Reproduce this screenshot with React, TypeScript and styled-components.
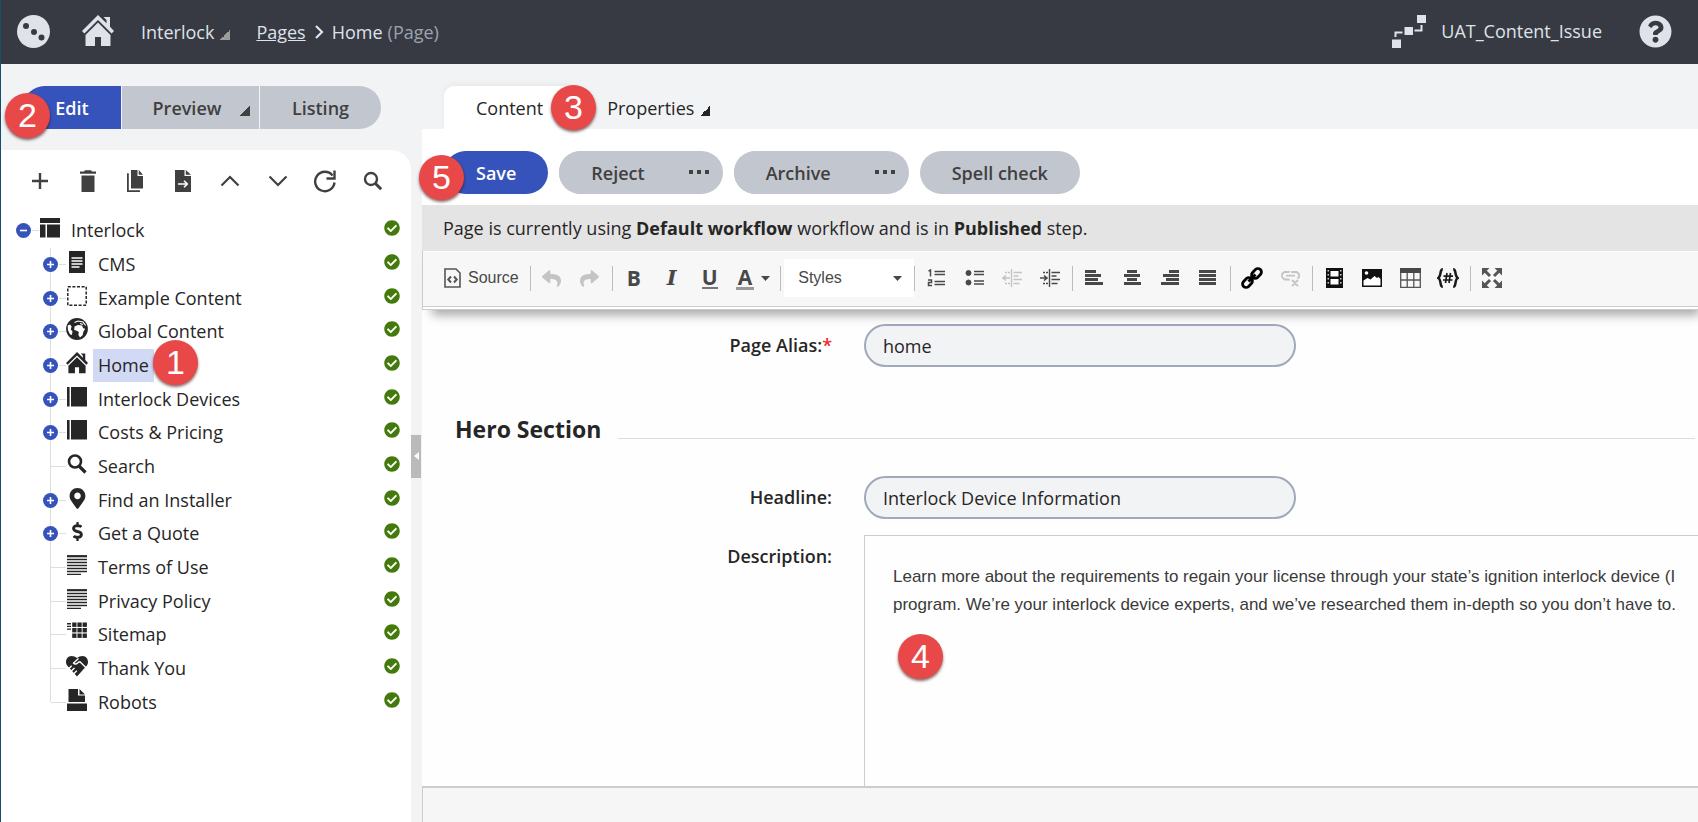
import React from 'react';
import styled, { createGlobalStyle, css } from 'styled-components';
import { FaCheckCircle, FaMapMarkerAlt, FaDollarSign, FaReply, FaShare, FaQuestionCircle } from 'react-icons/fa';

const ink = '#404040';

const GlobalStyle = createGlobalStyle`
  *, *::before, *::after { box-sizing: border-box; }
  body {
    margin: 0;
    background: #f2f3f5;
    color: #262626;
    font-family: 'Open Sans', sans-serif;
    font-size: 18px;
    line-height: 24px;
  }
  button, input, textarea, select { font: inherit; color: inherit; margin: 0; }
  button { border: 0; padding: 0; background: none; cursor: pointer; }
  a { color: inherit; }
  ul { list-style: none; margin: 0; padding: 0; }
  svg { display: block; flex: none; }
`;

/* ---------- Shell ---------- */

const Shell = styled.div`
  min-height: 100vh;
  display: flex;
  flex-direction: column;
  border-left: 1px solid #14506b;
  overflow: hidden;
`;

const TopBar = styled.header`
  height: 64px;
  flex: none;
  display: flex;
  align-items: center;
  padding: 0 26px 2px 16px;
  background: #373a42;
  color: #dfe2e8;
`;

const LogoLink = styled.a`
  display: flex;
  margin-right: 32px;
`;

const Breadcrumb = styled.nav`
  display: flex;
  align-items: center;
  flex: 1;
  padding-top: 2px;
  white-space: nowrap;
`;

const SiteButton = styled.button`
  display: flex;
  align-items: center;
  gap: 6px;
  margin: 0 26px 0 27px;
`;

const Chevron = styled.svg`
  margin: 0 8px 0 9px;
`;

const Muted = styled.span`
  color: #9da3b0;
  margin-left: 5px;
`;

const UserArea = styled.div`
  display: flex;
  align-items: center;
  gap: 15px;
  margin-right: 37px;
`;

const Corner = styled.span<{ $tone?: string }>`
  width: 10px;
  height: 10px;
  margin-top: 6px;
  background: linear-gradient(135deg, transparent 50%, ${(p) => p.$tone ?? '#262626'} 50%);
`;

const Body = styled.div`
  flex: 1;
  display: flex;
  min-height: 0;
`;

/* ---------- Left column ---------- */

const Sidebar = styled.aside`
  width: 410px;
  flex: none;
  display: flex;
  flex-direction: column;
`;

const Modes = styled.div`
  position: relative;
  display: flex;
  gap: 1px;
  padding: 22px 0 21px 22px;
`;

const ModeButton = styled.button<{ $active?: boolean; $width: number }>`
  height: 43px;
  width: ${(p) => p.$width}px;
  display: flex;
  align-items: center;
  justify-content: center;
  gap: 19px;
  font-weight: 600;
  background: ${(p) => (p.$active ? '#3553ba' : '#c2c6cf')};
  color: ${(p) => (p.$active ? '#fff' : ink)};
  &:first-child { border-radius: 22px 0 0 22px; }
  &:nth-child(2) { padding-left: 22px; }
  &:nth-child(3) { border-radius: 0 22px 22px 0; }
`;

const TreePanel = styled.section`
  flex: 1;
  background: #fff;
  border-radius: 0 20px 0 0;
  padding: 19px 11px 20px 14px;
`;

const TreeTools = styled.div`
  display: flex;
  justify-content: space-between;
  padding: 0 15px 0 13px;
  margin-bottom: 20px;
`;

const ToolButton = styled.button`
  width: 24px;
  height: 24px;
  display: flex;
  align-items: center;
  justify-content: center;
  color: ${ink};
`;

const Children = styled.ul`
  position: relative;
  display: grid;
  grid-auto-rows: 34px 33px 34px;
  padding-left: 27px;
  &::before {
    content: '';
    position: absolute;
    left: 35px;
    top: 1px;
    bottom: 16px;
    width: 1px;
    background: #dedede;
  }
`;

const Row = styled.div`
  position: relative;
  height: 34px;
  display: flex;
  align-items: center;
`;

const Toggle = styled.button`
  width: 17px;
  height: 17px;
`;

const Leaf = styled.span`
  width: 17px;
`;

const Connector = styled.span<{ $leaf?: boolean }>`
  width: ${(p) => (p.$leaf ? 15 : 7)}px;
  margin-left: ${(p) => (p.$leaf ? -8 : 0)}px;
  height: 1px;
  background: #dedede;
`;

const NodeIcon = styled.span`
  width: 22px;
  height: 22px;
  margin: 0 5px 4px 0;
  display: flex;
  align-items: center;
  justify-content: center;
`;

const NodeLabel = styled.a<{ $selected?: boolean }>`
  height: 33px;
  line-height: 33px;
  padding: 0 5px;
  text-decoration: none;
  white-space: nowrap;
  background: ${(p) => (p.$selected ? '#d1d9f5' : 'transparent')};
`;

const Status = styled(FaCheckCircle)`
  margin: 0 0 4px auto;
  color: #437a0b;
`;

const Splitter = styled.div`
  width: 11px;
  flex: none;
  display: flex;
  align-items: center;
`;

const SplitHandle = styled.button`
  width: 10px;
  height: 43px;
  margin-top: 26px;
  display: flex;
  align-items: center;
  justify-content: center;
  background: #bababa;
`;

/* ---------- Main column ---------- */

const Main = styled.main`
  flex: 1;
  min-width: 0;
  display: flex;
  flex-direction: column;
`;

const Tabs = styled.div`
  position: relative;
  display: flex;
  padding: 22px 0 0 22px;
`;

const Tab = styled.button<{ $active?: boolean }>`
  height: 43px;
  display: flex;
  align-items: center;
  gap: 6px;
  padding: 0 32px;
  ${(p) =>
    p.$active &&
    css`
      background: #fff;
      border-radius: 10px 10px 0 0;
      box-shadow: 0 -2px 6px rgba(0, 0, 0, 0.05);
    `}
`;

const Actions = styled.div`
  position: relative;
  display: flex;
  gap: 11px;
  padding: 22px 22px 11px;
  background: #fff;
`;

const Action = styled.button<{ $primary?: boolean }>`
  height: 43px;
  padding: 0 32px;
  border-radius: 22px;
  font-weight: 600;
  white-space: nowrap;
  background: ${(p) => (p.$primary ? '#3553ba' : '#c2c6cf')};
  color: ${(p) => (p.$primary ? '#fff' : ink)};
`;

const SplitAction = styled.div`
  display: flex;
  border-radius: 22px;
  background: #c2c6cf;
  & > ${Action} { padding-right: 0; }
`;

const More = styled.button`
  padding: 0 14px 2px 44px;
  color: ${ink};
`;

const Notice = styled.p`
  margin: 0;
  padding: 11px 21px;
  background: #e4e4e4;
  b { font-weight: 700; }
`;

const EditorBar = styled.div`
  position: relative;
  z-index: 1;
  height: 59px;
  flex: none;
  display: flex;
  align-items: center;
  padding: 0 0 4px 11px;
  background: #f7f7f7;
  border: 1px solid #ccc;
  border-width: 0 0 1px 1px;
  box-shadow: inset 0 1px #fff, inset 0 -2px #fff, inset 0 -3px #ccc, 6px 9px 10px -4px rgba(0, 0, 0, 0.35);
  font-family: 'Liberation Sans', sans-serif;
  font-size: 16px;
  color: #484848;
`;

const EditorGroup = styled.div`
  height: 25px;
  display: flex;
  align-items: center;
  padding: 0 3px 0 2px;
  & + & { border-left: 1px solid #bcbcbc; }
`;

const EditorButton = styled.button<{ $faded?: boolean; $pad?: number }>`
  height: 30px;
  min-width: 38px;
  padding: 0 ${(p) => p.$pad ?? 0}px;
  display: flex;
  align-items: center;
  justify-content: center;
  gap: 7px;
  white-space: nowrap;
  ${(p) => p.$faded && 'color: #c4c4c4;'}
`;

const Glyph = styled.span<{ $kind?: 'italic' | 'underline' | 'color' }>`
  font-family: 'Open Sans', sans-serif;
  font-weight: 700;
  font-size: 21px;
  line-height: 20px;
  ${(p) => p.$kind === 'italic' && "font-family: 'DejaVu Serif', serif; font-style: italic;"}
  ${(p) => p.$kind === 'underline' && 'border-bottom: 2px solid #777;'}
  ${(p) => p.$kind === 'color' && 'border-bottom: 3px solid #999; padding: 0 2px;'}
`;

const Combo = styled.div`
  position: relative;
  display: flex;
  align-items: center;
  margin-left: 1px;
  svg { position: absolute; right: 9px; pointer-events: none; }
`;

const ComboSelect = styled.select`
  width: 130px;
  height: 38px;
  padding: 0 14px;
  border: 0;
  appearance: none;
  background: #fff;
  margin-right: -3px;
`;

const Form = styled.form`
  flex: 1;
  display: flex;
  flex-direction: column;
  padding-top: 14px;
  background: #fefefe;
`;

const Field = styled.div<{ $grow?: boolean }>`
  display: grid;
  grid-template-columns: 410px minmax(0, 1fr);
  column-gap: 32px;
  ${(p) => p.$grow && 'flex: 1; margin-top: 16px;'}
`;

const Label = styled.label`
  line-height: 43px;
  height: 43px;
  text-align: right;
  font-weight: 600;
`;

const Required = styled.span`
  color: #f0282d;
`;

const TextInput = styled.input`
  width: 100%;
  max-width: 432px;
  height: 43px;
  padding: 0 17px;
  border: 2px solid #a0a9ba;
  border-radius: 22px;
  background: #f2f3f5;
`;

const SectionTitle = styled.div`
  display: flex;
  gap: 17px;
  align-items: flex-end;
  margin: 47px 3px 32px 33px;
  &::after {
    content: '';
    flex: 1;
    height: 1px;
    margin-bottom: 5px;
    background: #d9dde4;
  }
`;

const Heading = styled.h2`
  margin: 0;
  font-size: 23px;
  line-height: 30px;
  font-weight: 700;
`;

const RichArea = styled.div`
  position: relative;
  display: flex;
`;

const RichText = styled.textarea`
  flex: 1;
  min-height: 251px;
  padding: 27px 0 0 28px;
  border: 1px solid #ccc;
  border-width: 1px 0 0 1px;
  background: #fefefe;
  color: #3a3a3a;
  font-family: 'Liberation Sans', sans-serif;
  font-size: 17px;
  line-height: 28px;
  resize: none;
  overflow: hidden;
  white-space: pre;
  outline: 0;
`;

const Footer = styled.footer`
  height: 36px;
  flex: none;
  border: 1px solid #ccc;
  border-width: 2px 0 0 1px;
  background: #f6f6f6;
`;

const Badge = styled.span<{ $x: number; $y: number }>`
  position: absolute;
  z-index: 2;
  left: ${(p) => p.$x}px;
  top: ${(p) => p.$y}px;
  width: 45px;
  height: 45px;
  border-radius: 50%;
  background: #e94848;
  box-shadow: 0 2px 3px rgba(60, 0, 0, 0.6);
  color: #fff;
  font-family: 'Liberation Sans', sans-serif;
  font-size: 34px;
  line-height: 44px;
  text-align: center;
`;

/* ---------- Drawings ---------- */

const HomeShape = ({ size }: { size: number }) => (
  <svg width={size} height={size} viewBox="0 0 32 32" fill="currentColor">
    <path d="M16 0 0 16l2.400 2.400L16 5l13.600 13.400L32 16l-4-4.200V2h-6.500l3 3v3.300z" />
    <path d="M16 7.500 3.500 20v11H13v-9h6v9h9.500V20z" />
  </svg>
);

const Caret = () => (
  <svg width="9" height="5" viewBox="0 0 9 5"><path d="M0 0h9L4.500 5z" fill="#484848" /></svg>
);

const Dots = () => (
  <svg width="20" height="4" viewBox="0 0 20 4" fill={ink}><path d="M0 0h4v4H0zM8 0h4v4H8zM16 0h4v4h-4z" /></svg>
);

const Bars = ({ rows }: { rows: number[][] }) => (
  <svg width="18" height="18" viewBox="0 0 18 18" fill="currentColor">
    {rows.map(([x, y, w, h], i) => <rect key={i} x={x} y={y} width={w} height={h} />)}
  </svg>
);

const ToggleMark = ({ open }: { open?: boolean }) => (
  <svg width="17" height="17" viewBox="0 0 17 17">
    <circle cx="8.500" cy="8.500" r="7.500" fill="#3553ba" />
    <path d={open ? 'M5 8.500h7' : 'M5 8.500h7M8.500 5v7'} stroke="#fff" strokeWidth="1.600" />
  </svg>
);

const icons: Record<string, React.ReactNode> = {
  layout: (
    <svg width="20" height="20" viewBox="0 0 20 20"><path d="M0 0h20v5H0zM0 6.500h5.500v13H0zM7 6.500h13v13H7z" fill="#262626" /></svg>
  ),
  page: (
    <svg width="18" height="22" viewBox="0 0 18 22">
      <path d="M1 0h16v22H1z" fill="#262626" />
      <path d="M3.500 7h11M3.500 10h11M3.500 13h11M3.500 16h8" stroke="#fff" strokeWidth="1.400" />
    </svg>
  ),
  dashed: (
    <svg width="20" height="20" viewBox="0 0 20 20">
      <rect x=".8" y=".8" width="18.400" height="18.400" fill="none" stroke="#262626" strokeWidth="1.500" strokeDasharray="3 1.600" />
    </svg>
  ),
  globe: (
    <svg width="22" height="22" viewBox="0 0 22 22">
      <circle cx="11" cy="11" r="10.900" fill="#262626" />
      <path d="M1.700 7.500 4 6.500l1.600 2-.8 3 1.700 2-.6 3.500-2-.8-2-4.200z" fill="#fff" />
      <path d="M8.500 8.500 12 7l4 .6 1.200 2.600 2 .6-1.800 3-.8 3.500-2.600 2.200-1.600-2.500.4-3-2-1.200-2.600-.8z" fill="#fff" />
      <path d="M8.500 4.500 12 3l5 1 2.600 3.500M14 5.500l3 1" fill="none" stroke="#fff" strokeWidth="1.200" />
    </svg>
  ),
  home: <HomeShape size={22} />,
  book: (
    <svg width="20" height="20" viewBox="0 0 20 20"><path d="M0 0h2.600v19.500H0zM4 0h16v19.500H4z" fill="#262626" /></svg>
  ),
  search: (
    <svg width="20" height="20" viewBox="0 0 20 20" fill="none" stroke="#262626">
      <circle cx="8" cy="7.500" r="6" strokeWidth="2.600" /><path d="m12 12 6.500 6.500" strokeWidth="3.200" />
    </svg>
  ),
  pin: <FaMapMarkerAlt size={21} />,
  dollar: <FaDollarSign size={19} />,
  lines: (
    <svg width="20" height="20" viewBox="0 0 20 20">
      <path d="M0 1.200h20" stroke="#262626" strokeWidth="2.200" />
      <path d="M0 4.500h20M0 7.500h20M0 10.500h20M0 13.500h20M0 16.500h20M0 19.300h14" stroke="#262626" strokeWidth="1.300" />
    </svg>
  ),
  sitemap: (
    <svg width="20" height="20" viewBox="0 0 20 20" fill="#262626">
      <path d="M0 1h4v1.400H0zM0 3.700h4v1.400H0zM0 6.400h4v1.400H0z" />
      {[0.500, 6, 11.500].map((y) => [5.200, 10.400, 15.600].map((x) => <rect key={`${x}-${y}`} x={x} y={y} width="4.300" height="4.400" />))}
    </svg>
  ),
  handshake: (
    <svg width="22" height="21" viewBox="0 0 22 21">
      <path
        d="M5.500 0C2 0 0 3 0 6c0 2 1 3.600 2.500 5L11 20.500 19.500 11C21 9.600 22 8 22 6c0-3-2-6-5.500-6C14.400 0 12.600.8 11 2 9.400.8 7.600 0 5.500 0z"
        fill="#262626"
      />
      <path d="M12.500 2.500 7.500 7c1.200 1.800 3.500 1.200 5-.8l1.500-.4 6 6" fill="none" stroke="#fff" strokeWidth="1.400" />
      <path d="m2.500 13 3.200-3.200M4.800 15.600l3.700-3.600M7.500 18l3.300-3.300" fill="none" stroke="#fff" strokeWidth="1.400" />
    </svg>
  ),
  robots: (
    <svg width="20" height="22" viewBox="0 0 20 22" fill="#262626"><path d="M1.500 0H11v6.500h7V13H1.500zM12.500 0 18 5.500h-5.500zM0 14.500h20V22H0z" /></svg>
  ),
};

const nodes: [string, string, boolean][] = [
  ['CMS', 'page', true],
  ['Example Content', 'dashed', true],
  ['Global Content', 'globe', true],
  ['Home', 'home', true],
  ['Interlock Devices', 'book', true],
  ['Costs & Pricing', 'book', true],
  ['Search', 'search', false],
  ['Find an Installer', 'pin', true],
  ['Get a Quote', 'dollar', true],
  ['Terms of Use', 'lines', false],
  ['Privacy Policy', 'lines', false],
  ['Sitemap', 'sitemap', false],
  ['Thank You', 'handshake', false],
  ['Robots', 'robots', false],
];

const treeTools: [string, React.ReactNode][] = [
  ['Add', <svg width="18" height="18" viewBox="0 0 18 18"><path d="M1 9h16M9 1v16" stroke={ink} strokeWidth="2.400" /></svg>],
  ['Delete', <svg width="18" height="22" viewBox="0 0 18 22" fill={ink}><path d="M1 1.500h4L6 .3h6l1 1.200h4v2.300H1zM2.500 5.500h13V22h-13z" /></svg>],
  ['Copy', <svg width="18" height="22" viewBox="0 0 18 22" fill={ink}><path d="M5 0h6.500v6H17v12.500H5zM12.700 0 17 4.700h-4.300zM1 3.200h1.800v17H14V22H1z" /></svg>],
  ['Move', <svg width="18" height="22" viewBox="0 0 18 22"><path d="M1 0h9.500v6H17v16H1zM11.800 0 17 4.700h-5.200z" fill={ink} /><path d="M4 14h9M10 10.800l3.300 3.200-3.300 3.200" fill="none" stroke="#fff" strokeWidth="1.600" /></svg>],
  ['Move up', <svg width="20" height="12" viewBox="0 0 20 12"><path d="m1.500 10.500 8.500-8.500 8.500 8.500" fill="none" stroke={ink} strokeWidth="2.200" /></svg>],
  ['Move down', <svg width="20" height="12" viewBox="0 0 20 12"><path d="M1.500 1.500 10 10l8.500-8.500" fill="none" stroke={ink} strokeWidth="2.200" /></svg>],
  ['Refresh', <svg width="24" height="24" viewBox="0 0 24 24"><path d="M19.500 6.500A9.700 9.700 0 1 0 21.500 13.500" fill="none" stroke={ink} strokeWidth="2.400" /><path d="M21.500 1.500v8h-8" fill="none" stroke={ink} strokeWidth="2.400" /></svg>],
  ['Search', <svg width="20" height="20" viewBox="0 0 20 20" fill="none" stroke={ink}><circle cx="8" cy="8" r="6" strokeWidth="2.400" /><path d="m12.200 12.200 6 6" strokeWidth="3" /></svg>],
];

const IndentIcon = ({ out }: { out?: boolean }) => (
  <svg width="20" height="18" viewBox="0 0 20 18" stroke="currentColor" fill="none">
    <path d="M9.500 0v18" strokeWidth="1.400" />
    <path d="M3 3.500h2M6 3.500h2M3 14.500h2M6 14.500h2M11.500 3.500H20M11.500 7h5M11.500 10.500H20M11.500 14.500h6" strokeWidth="1.500" />
    <path d={out ? 'M1 9h7M4 6.500 1 9l3 2.500' : 'M0 9h6M4 6.500 7 9l-3 2.500'} strokeWidth="1.600" />
  </svg>
);

const alignments: [string, number[][]][] = [
  ['Align left', [[0, 1, 11, 3], [0, 5, 16, 3], [0, 9, 13, 3], [0, 13, 18, 3]]],
  ['Center', [[4, 1, 10, 3], [1, 5, 16, 3], [4, 9, 10, 3], [1, 13, 17, 3]]],
  ['Align right', [[8, 1, 10, 3], [2, 5, 16, 3], [5, 9, 13, 3], [0, 13, 18, 3]]],
  ['Justify', [[0, 1, 17, 3], [0, 5, 17, 3], [0, 9, 17, 3], [0, 13, 17, 3]]],
];

/* ---------- Page ---------- */

function Tree() {
  return (
    <nav aria-label="Pages">
      <ul>
        <li>
          <Row>
            <Toggle type="button" aria-label="Collapse Interlock"><ToggleMark open /></Toggle>
            <Connector />
            <NodeIcon>{icons.layout}</NodeIcon>
            <NodeLabel href="#interlock">Interlock</NodeLabel>
            <Status size={16} />
          </Row>
          <Children>
            {nodes.map(([name, icon, branch]) => (
              <li key={name}>
                <Row>
                  {branch ? <Toggle type="button" aria-label={`Expand ${name}`}><ToggleMark /></Toggle> : <Leaf />}
                  <Connector $leaf={!branch} />
                  <NodeIcon>{icons[icon]}</NodeIcon>
                  <NodeLabel href="#node" $selected={name === 'Home'}>{name}</NodeLabel>
                  {name === 'Home' && <Badge $x={111} $y={-8}>1</Badge>}
                  <Status size={16} />
                </Row>
              </li>
            ))}
          </Children>
        </li>
      </ul>
    </nav>
  );
}

function EditorToolbar() {
  return (
    <EditorBar>
      <EditorGroup>
        <EditorButton type="button" $pad={8}>
          <svg width="17" height="20" viewBox="0 0 17 20" fill="none" stroke="#555">
            <path d="M1 1h11l4 4v14H1z" strokeWidth="1.600" />
            <path d="M7 8.500 4.300 11.500 7 14.500M10 8.500l2.700 3-2.700 3" strokeWidth="2" />
          </svg>
          Source
        </EditorButton>
      </EditorGroup>
      <EditorGroup>
        <EditorButton type="button" $faded aria-label="Undo"><FaReply size={19} /></EditorButton>
        <EditorButton type="button" $faded aria-label="Redo"><FaShare size={19} /></EditorButton>
      </EditorGroup>
      <EditorGroup>
        <EditorButton type="button"><Glyph>B</Glyph></EditorButton>
        <EditorButton type="button"><Glyph $kind="italic">I</Glyph></EditorButton>
        <EditorButton type="button"><Glyph $kind="underline">U</Glyph></EditorButton>
        <EditorButton type="button" $pad={7}><Glyph $kind="color">A</Glyph><Caret /></EditorButton>
      </EditorGroup>
      <EditorGroup>
        <Combo>
          <ComboSelect aria-label="Styles"><option>Styles</option></ComboSelect>
          <Caret />
        </Combo>
      </EditorGroup>
      <EditorGroup>
        <EditorButton type="button" aria-label="Numbered list">
          <svg width="18" height="18" viewBox="0 0 18 18" fill="none" stroke="currentColor">
            <path d="M1.500 2.200 3.500 1v6.500M1 11h3.500v2.500H1.500v3H5" strokeWidth="1.500" />
            <path d="M7.500 2.500H18M7.500 5.500H18M7.500 12.500H18M7.500 15.500H18" strokeWidth="1.400" />
          </svg>
        </EditorButton>
        <EditorButton type="button" aria-label="Bulleted list">
          <svg width="19" height="18" viewBox="0 0 19 18" fill="currentColor" stroke="currentColor">
            <circle cx="3.500" cy="4" r="2.500" /><circle cx="3.500" cy="13.500" r="2.500" />
            <path d="M9 2.500h10M9 5.500h10M9 12h10M9 15h10" strokeWidth="1.400" />
          </svg>
        </EditorButton>
        <EditorButton type="button" $faded aria-label="Decrease indent"><IndentIcon out /></EditorButton>
        <EditorButton type="button" aria-label="Increase indent"><IndentIcon /></EditorButton>
      </EditorGroup>
      <EditorGroup>
        {alignments.map(([name, rows]) => (
          <EditorButton key={name} type="button" aria-label={name}><Bars rows={rows} /></EditorButton>
        ))}
      </EditorGroup>
      <EditorGroup>
        <EditorButton type="button" aria-label="Link">
          <svg width="22" height="22" viewBox="0 0 22 22" fill="none" stroke="#000" strokeWidth="2.800">
            <rect x="-5.500" y="-3.500" width="11" height="7" rx="3.500" transform="translate(15.500 6.500) rotate(-45)" />
            <rect x="-5.500" y="-3.500" width="11" height="7" rx="3.500" transform="translate(6.500 15.500) rotate(-45)" />
            <path d="m7.500 14.500 7-7" strokeWidth="3" />
          </svg>
        </EditorButton>
        <EditorButton type="button" $faded aria-label="Unlink">
          <svg width="19" height="17" viewBox="0 0 19 17" fill="none" stroke="currentColor" strokeWidth="1.800">
            <path d="M8 2.500V2H3.500L1 4v3l2.500 2.500H8V9M10 2.500 11 2h4.500L18 4v3l-1.500 1.500M5 5.700h9M11 10l6 6M17 10l-6 6" />
          </svg>
        </EditorButton>
      </EditorGroup>
      <EditorGroup>
        <EditorButton type="button" aria-label="Media">
          <svg width="17" height="20" viewBox="0 0 17 20">
            <path d="M0 0h17v20H0z" fill="#111" />
            <path d="M4.500 3h8v5.500h-8zM4.500 11h8v5.500h-8z" fill="#fff" />
            <path d="M2.200 2v16M14.800 2v16" stroke="#fff" strokeWidth="1.200" strokeDasharray="1.600 2.400" />
          </svg>
        </EditorButton>
        <EditorButton type="button" aria-label="Image">
          <svg width="20" height="18" viewBox="0 0 20 18">
            <path d="M0 0h20v18H0z" fill="#111" />
            <path d="M1.500 16.500v-5l4-2.500 3 1.500 4-3.500 2.500 2 1.500-1 2 2v6.500z" fill="#fff" />
            <circle cx="4.500" cy="4" r="1.800" fill="#fff" />
          </svg>
        </EditorButton>
        <EditorButton type="button" aria-label="Table">
          <svg width="21" height="20" viewBox="0 0 21 20" fill="none" stroke="#555">
            <path d="M0 0h21v5H0z" fill="#484848" stroke="none" />
            <path d="M.7 5v14.300h19.600V5M.7 12h19.600M7.200 5v14M13.800 5v14" strokeWidth="1.300" />
          </svg>
        </EditorButton>
        <EditorButton type="button" aria-label="Insert token">
          <svg width="22" height="20" viewBox="0 0 22 20" fill="none" stroke="#1b1b1b" strokeWidth="2.500">
            <path d="M5.800 1.200C2.300 1.200 4.800 8 1.300 10c3.500 2 1 8.800 4.500 8.800M16.200 1.200c3.500 0 1 6.800 4.500 8.800-3.500 2-1 8.800-4.500 8.800" />
            <path d="M10 5 8.500 15M13.500 5 12 15M6.500 8.200h9.500M6 12h9.500" strokeWidth="1.700" />
          </svg>
        </EditorButton>
      </EditorGroup>
      <EditorGroup>
        <EditorButton type="button" aria-label="Maximize">
          <svg width="20" height="20" viewBox="0 0 20 20" fill="#555" stroke="#555">
            <path d="M0 0h7.500L0 7.500zM20 0v7.500L12.500 0zM0 20v-7.500L7.500 20zM20 20h-7.500l7.500-7.500z" stroke="none" />
            <path d="m3 3 5 5M17 3l-5 5M3 17l5-5M17 17l-5-5" strokeWidth="3" />
          </svg>
        </EditorButton>
      </EditorGroup>
    </EditorBar>
  );
}

export default function App() {
  return (
    <Shell>
      <GlobalStyle />
      <TopBar>
        <LogoLink href="#dashboard" aria-label="Dashboard">
          <svg width="33" height="33" viewBox="0 0 33 33">
            <circle cx="16.500" cy="16.500" r="16.500" fill="#dfe2e8" />
            <g fill="#373a42"><circle cx="9" cy="11" r="3" /><circle cx="17" cy="17" r="3" /><circle cx="24.500" cy="22.500" r="3" /></g>
          </svg>
        </LogoLink>
        <a href="#home" aria-label="Home"><HomeShape size={32} /></a>
        <Breadcrumb aria-label="Breadcrumb">
          <SiteButton type="button">Interlock<Corner $tone="#9b9b9b" /></SiteButton>
          <a href="#pages">Pages</a>
          <Chevron width="9" height="14" viewBox="0 0 9 14"><path d="m1 1 6 6-6 6" fill="none" stroke="#dfe2e8" strokeWidth="2.200" /></Chevron>
          <span>Home</span>
          <Muted>(Page)</Muted>
        </Breadcrumb>
        <UserArea>
          <svg width="34" height="33" viewBox="0 0 34 33" fill="#dfe2e8">
            <path d="M25 0h9v8h-9zM12.500 12h8.500v8h-8.500zM0 24.500h9V33H0z" />
            <path d="M3.500 22v-4.500H10.500M22.500 15.500h7V10" fill="none" stroke="#dfe2e8" strokeWidth="2" />
          </svg>
          UAT_Content_Issue
        </UserArea>
        <a href="#help" aria-label="Help"><FaQuestionCircle size={33} /></a>
      </TopBar>
      <Body>
        <Sidebar>
          <Modes>
            <ModeButton type="button" $active $width={98}>Edit</ModeButton>
            <ModeButton type="button" $width={137}>Preview<Corner $tone={ink} /></ModeButton>
            <ModeButton type="button" $width={121}>Listing</ModeButton>
            <Badge $x={4} $y={29}>2</Badge>
          </Modes>
          <TreePanel>
            <TreeTools>
              {treeTools.map(([name, icon]) => (
                <ToolButton key={name} type="button" aria-label={name}>{icon}</ToolButton>
              ))}
            </TreeTools>
            <Tree />
          </TreePanel>
        </Sidebar>
        <Splitter>
          <SplitHandle type="button" aria-label="Collapse panel">
            <svg width="5" height="8" viewBox="0 0 5 8"><path d="M5 0v8L0 4z" fill="#fff" /></svg>
          </SplitHandle>
        </Splitter>
        <Main>
          <Tabs>
            <Tab type="button" $active>Content</Tab>
            <Tab type="button">Properties<Corner /></Tab>
            <Badge $x={129} $y={21}>3</Badge>
          </Tabs>
          <Actions>
            <Action type="button" $primary>Save</Action>
            <SplitAction>
              <Action type="button">Reject</Action>
              <More type="button" aria-label="More reject options"><Dots /></More>
            </SplitAction>
            <SplitAction>
              <Action type="button">Archive</Action>
              <More type="button" aria-label="More archive options"><Dots /></More>
            </SplitAction>
            <Action type="button">Spell check</Action>
            <Badge $x={-3} $y={26}>5</Badge>
          </Actions>
          <Notice>Page is currently using <b>Default workflow</b> workflow and is in <b>Published</b> step.</Notice>
          <EditorToolbar />
          <Form>
            <Field>
              <Label htmlFor="alias">Page Alias:<Required>*</Required></Label>
              <TextInput id="alias" defaultValue="home" />
            </Field>
            <SectionTitle><Heading>Hero Section</Heading></SectionTitle>
            <Field>
              <Label htmlFor="headline">Headline:</Label>
              <TextInput id="headline" defaultValue="Interlock Device Information" />
            </Field>
            <Field $grow>
              <Label htmlFor="description">Description:</Label>
              <RichArea>
                <RichText
                  id="description"
                  defaultValue={'Learn more about the requirements to regain your license through your state’s ignition interlock device (I\nprogram. We’re your interlock device experts, and we’ve researched them in-depth so you don’t have to.'}
                />
                <Badge $x={34} $y={99}>4</Badge>
              </RichArea>
            </Field>
          </Form>
          <Footer />
        </Main>
      </Body>
    </Shell>
  );
}
